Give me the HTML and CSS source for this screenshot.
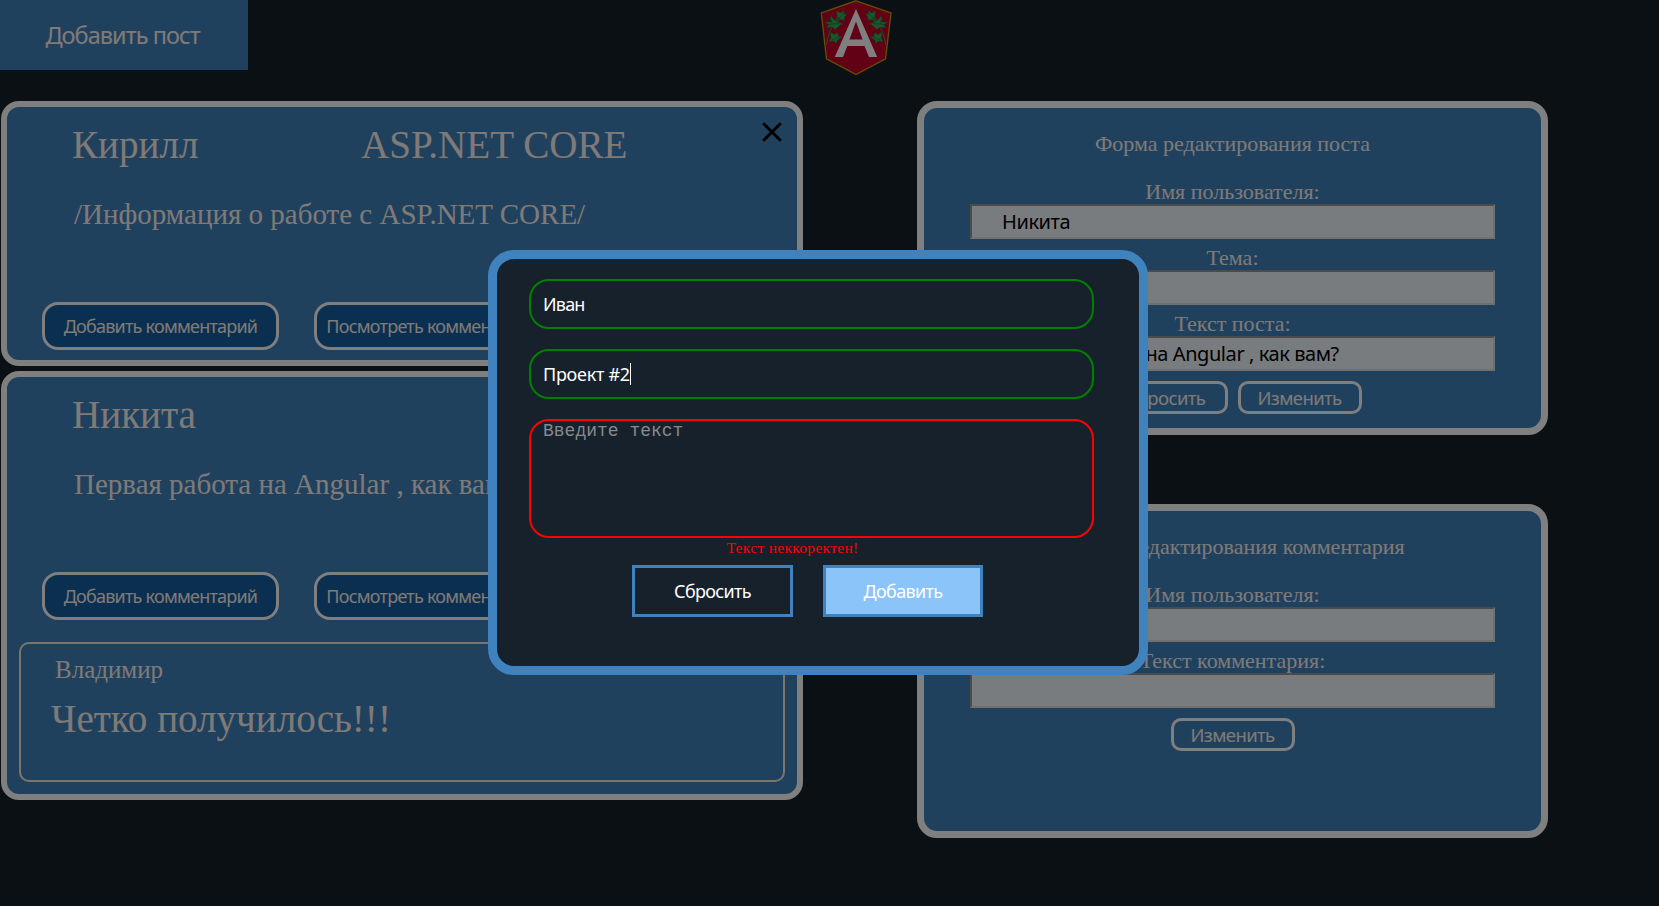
FILE: index.html
```
<!DOCTYPE html>
<html lang="ru">
<head>
<meta charset="utf-8">
<title>Посты</title>
<link rel="stylesheet" href="styles.css">
</head>
<body>
<header class="header">
  <button class="add-post">Добавить пост</button>
  <svg class="logo" viewBox="0 0 72 76">
    <path d="M36 .8 71 13 65.500 58.800 36 74.500 6.500 58.800 1.300 13Z" fill="#c4002b" stroke="#c9a000" stroke-width="1.300"/>
    <path d="M36 9 57.200 57H49L44.500 46H27.300L23 57H14.800ZM36 21.500 29.500 39.500H42.500Z" fill="#fff" fill-rule="evenodd"/>
    <g id="ivy">
      <path d="M6.500 45C8 35 11 28 18 16" fill="none" stroke="#4f9a50" stroke-width="1"/>
      <path d="M16.500 11l4.500 2 2.500-2.500 1 3.500 2.500 0-2.500 3 0 3.500-4-1-4 2 1-4zM4.500 22l6 0 0-6.500 4.500 5 4.500-2.500-1 4.500 4.500 1-4.500 3-3 3-3.500-2.500-6 1 2.500-3zM10 32l4.500 2.500 3-2 1 3.500 3.500 1-4.500 3-1 3.500-3-2.500-4.500 1 2-4z" fill="#38ac58" stroke="#1f7038" stroke-width=".7"/>
      <path d="M8 24.500 19 23.500M12 24 11 19M18 19 24 13M12 40 20 36.500" fill="none" stroke="#1f7038" stroke-width=".7"/>
    </g>
    <use href="#ivy" transform="translate(72.300 0) scale(-1 1)"/>
  </svg>
</header>

<main class="main">
  <section class="posts">
    <article class="post">
      <div class="post-head"><span class="author">Кирилл</span><span class="topic">ASP.NET CORE</span></div>
      <svg class="close" viewBox="0 0 20 20"><path d="M1.200 1.200 18.800 18.800M18.800 1.200 1.200 18.800" stroke="#000" stroke-width="3"/></svg>
      <p class="post-text">/Информация о работе с ASP.NET CORE/</p>
      <div class="post-actions"><button class="post-btn">Добавить комментарий</button><button class="post-btn">Посмотреть комментарии</button></div>
    </article>
    <article class="post post-open">
      <div class="post-head"><span class="author">Никита</span></div>
      <p class="post-text">Первая работа на Angular , как вам?</p>
      <div class="post-actions"><button class="post-btn">Добавить комментарий</button><button class="post-btn">Посмотреть комментарии</button></div>
      <div class="comment">
        <p class="comment-author">Владимир</p>
        <p class="comment-text">Четко получилось!!!</p>
      </div>
    </article>
  </section>

  <aside class="forms">
    <form class="edit-form">
      <h2 class="form-title">Форма редактирования поста</h2>
      <label class="form-label">Имя пользователя:</label>
      <div class="form-input">Никита</div>
      <label class="form-label">Тема:</label>
      <div class="form-input"></div>
      <label class="form-label">Текст поста:</label>
      <div class="form-input">Первая работа на Angular , как вам?</div>
      <div class="form-actions"><button class="form-btn" type="button">Сбросить</button><button class="form-btn" type="button">Изменить</button></div>
    </form>
    <form class="edit-form">
      <h2 class="form-title">Форма редактирования комментария</h2>
      <label class="form-label">Имя пользователя:</label>
      <div class="form-input"></div>
      <label class="form-label">Текст комментария:</label>
      <div class="form-input"></div>
      <div class="form-actions"><button class="form-btn" type="button">Изменить</button></div>
    </form>
  </aside>
</main>

<div class="overlay">
  <div class="modal">
    <div class="field">Иван</div>
    <div class="field field-active">Проект #2<span class="caret"></span></div>
    <div class="field field-area">Введите текст</div>
    <p class="error">Текст неккоректен!</p>
    <div class="modal-actions"><button class="modal-btn">Сбросить</button><button class="modal-btn modal-btn-primary">Добавить</button></div>
  </div>
</div>
</body>
</html>
```
FILE: styles.css
```
* { box-sizing: border-box; }
body {
  margin: 0;
  height: 906px;
  overflow: hidden;
  background: #17212b;
  font-family: "Liberation Serif", serif;
  color: #fff5ee;
}
p, h2 { margin: 0; font-weight: 400; }
button { font-family: "Noto Sans", sans-serif; color: #fff5ee; padding: 0; white-space: nowrap; }

.header { height: 101px; display: flex; align-items: flex-start; }
.add-post { width: 248px; height: 70px; border: 0; background: #4082bd; font-size: 23.5px; padding: 0 3px 1px 0; letter-spacing: -0.95px; }
.logo { width: 72px; height: 76px; margin-left: 572px; }

.main { display: flex; align-items: flex-start; padding-left: 1px; }
.posts { width: 802px; display: flex; flex-direction: column; gap: 5px; }
.post {
  position: relative;
  height: 265px;
  border: 6px solid #fff;
  border-radius: 18px;
  background: #4082bd;
  padding-top: 15px;
}
.post-open { height: 429px; }
.post-head { display: flex; height: 46px; padding-left: 65px; font-size: 39.1px; line-height: 46px; }
.author { width: 289px; }
.close { position: absolute; top: 15px; right: 15px; width: 20px; height: 20px; }
.post-text { margin: 29px 0 71px 67px; font-size: 29px; line-height: 34px; white-space: nowrap; }
.post-actions { display: flex; gap: 35px; padding-left: 35px; }
.post-btn { width: 237px; height: 48px; border: 3px solid #fff; border-radius: 16px; background: #165ea0; font-size: 18px; letter-spacing: -0.77px; }
.comment { width: 766px; height: 140px; margin: 22px 0 0 12px; border: 2px solid #faebd7; border-radius: 10px; padding: 12px 0 0 30px; }
.comment-author { padding-left: 4px; font-size: 25px; line-height: 27px; }
.comment-text { margin-top: 13px; font-size: 39.1px; line-height: 46px; }

.forms { margin-left: 114px; width: 631px; display: flex; flex-direction: column; gap: 69px; }
.edit-form {
  height: 334px;
  border: 7px solid #fff;
  border-radius: 20px;
  background: #4082bd;
  padding: 23px 46px 0;
  text-align: center;
}
.form-title { margin-bottom: 23px; font-size: 22px; line-height: 25px; }
.form-label { display: block; height: 25px; font-size: 22px; line-height: 25px; }
.form-input {
  height: 35px;
  margin-bottom: 6px;
  border: 2px solid;
  border-color: #969696 #e0e0e0 #e0e0e0 #969696;
  background: #f0f8ff;
  color: #000;
  padding-left: 30px;
  text-align: left;
  font: 20px/32px "Noto Sans", sans-serif;
  letter-spacing: -0.43px;
}
.form-actions { display: flex; justify-content: center; gap: 10px; margin-top: 10px; }
.form-btn { width: 124px; height: 33px; border: 3px solid #fff; border-radius: 10px; background: transparent; font-size: 18.5px; line-height: 28px; letter-spacing: -0.6px; }

.overlay { position: fixed; inset: 0; background: rgba(0, 0, 0, 0.5); padding: 250px 0 0 488px; }
.modal {
  width: 660px;
  height: 425px;
  border: 9px solid #4082bd;
  border-radius: 26px;
  background: #17212b;
  padding: 20px 45px 0 32px;
}
.field {
  display: flex;
  align-items: center;
  height: 50px;
  margin-bottom: 20px;
  border: 2px solid green;
  border-radius: 20px;
  padding-left: 12px;
  color: #fff;
  font: 18px/22px "Noto Sans", sans-serif;
  letter-spacing: -0.8px;
}
.field-active { letter-spacing: -0.28px; }
.caret { width: 1px; height: 22px; background: #fff; }
.field-area {
  height: 119px;
  margin-bottom: 0;
  border-color: red;
  align-items: flex-start;
  color: #858a8f;
  font: 18px/20px "Liberation Mono", monospace;
  letter-spacing: 0;
}
.error { height: 27px; text-align: center; padding-right: 38px; color: red; font-size: 15.5px; line-height: 19px; letter-spacing: 0.3px; }
.modal-actions { display: flex; gap: 30px; padding-left: 103px; }
.modal-btn { width: 161px; height: 52px; border: 3px solid #4082bd; background: transparent; color: #fff; font-size: 18px; letter-spacing: -0.65px; }
.modal-btn-primary { width: 160px; background: #8bc4f9; }
```
